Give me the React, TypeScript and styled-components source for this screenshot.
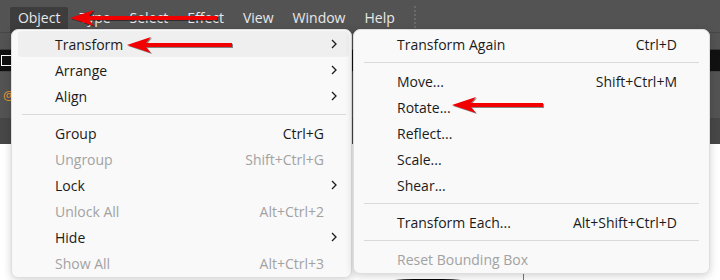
import React from "react";
import styled, { createGlobalStyle } from "styled-components";

const GlobalStyle = createGlobalStyle`
  body {
    margin: 0;
    background: #ffffff;
    font-family: "Open Sans", "Noto Sans", sans-serif;
  }
`;

type Entry =
  | { kind: "item"; label: string; shortcut?: string; sub?: boolean; disabled?: boolean; active?: boolean }
  | { kind: "sep" };

const objectMenu: Entry[] = [
  { kind: "item", label: "Transform", sub: true, active: true },
  { kind: "item", label: "Arrange", sub: true },
  { kind: "item", label: "Align", sub: true },
  { kind: "sep" },
  { kind: "item", label: "Group", shortcut: "Ctrl+G" },
  { kind: "item", label: "Ungroup", shortcut: "Shift+Ctrl+G", disabled: true },
  { kind: "item", label: "Lock", sub: true },
  { kind: "item", label: "Unlock All", shortcut: "Alt+Ctrl+2", disabled: true },
  { kind: "item", label: "Hide", sub: true },
  { kind: "item", label: "Show All", shortcut: "Alt+Ctrl+3", disabled: true },
];

const transformMenu: Entry[] = [
  { kind: "item", label: "Transform Again", shortcut: "Ctrl+D" },
  { kind: "sep" },
  { kind: "item", label: "Move...", shortcut: "Shift+Ctrl+M" },
  { kind: "item", label: "Rotate..." },
  { kind: "item", label: "Reflect..." },
  { kind: "item", label: "Scale..." },
  { kind: "item", label: "Shear..." },
  { kind: "sep" },
  { kind: "item", label: "Transform Each...", shortcut: "Alt+Shift+Ctrl+D" },
  { kind: "sep" },
  { kind: "item", label: "Reset Bounding Box", disabled: true },
];

const barItems = ["Edit", "Object", "Type", "Select", "Effect", "View", "Window", "Help"];

export default function App() {
  return (
    <>
      <GlobalStyle />
      <Screen>
        <MenuBar>
          {barItems.map((name) => (
            <BarItem key={name} $open={name === "Object"} $lead={name === "Edit"}>
              {name}
            </BarItem>
          ))}
          <Grip />
        </MenuBar>

        <ControlBar>
          <Caret>⌄</Caret>
        </ControlBar>
        <TabStrip>
          <TabBox />
        </TabStrip>
        <Panel>
          <PanelIcon>@</PanelIcon>
        </Panel>
        <PanelDark />
        <Canvas>
          <Artwork />
          <Guide />
        </Canvas>

        <Menu $left={11} $top={29} $width={341} $padRight={2}>
          {objectMenu.map((e, i) => renderEntry(e, i))}
        </Menu>
        <Menu $left={353} $top={29} $width={357} $padRight={7} $raised>
          {transformMenu.map((e, i) => renderEntry(e, i))}
        </Menu>

        <Arrow x={70} y={17.5} length={147} />
        <Arrow x={127} y={44.5} length={105} />
        <Arrow x={452} y={105} length={91} />
      </Screen>
    </>
  );
}

function renderEntry(e: Entry, i: number) {
  if (e.kind === "sep") return <Separator key={i} />;
  return (
    <Row key={i} $active={e.active} $disabled={e.disabled}>
      <span>{e.label}</span>
      <Shortcut>{e.shortcut}</Shortcut>
      <Chevron>{e.sub ? <ChevronIcon /> : null}</Chevron>
    </Row>
  );
}

const ChevronIcon = () => (
  <svg width="6" height="10" viewBox="0 0 6 10">
    <path d="M1 1 L5 5 L1 9" fill="none" stroke="#1b1b1b" strokeWidth="1.3" />
  </svg>
);

const Arrow: React.FC<{ x: number; y: number; length: number }> = ({ x, y, length }) => {
  const h = 16;
  const head = 24;
  return (
    <ArrowSvg
      width={length}
      height={h}
      viewBox={`0 0 ${length} ${h}`}
      style={{ left: x, top: y - h / 2 }}
    >
      <path
        d={`M0 8 L${head} 0 L${head - 5} 6 L${length} 6 L${length} 10 L${head - 5} 10 L${head} 16 Z`}
        fill="#f20000"
      />
    </ArrowSvg>
  );
};

const Screen = styled.div`
  position: relative;
  width: 720px;
  height: 280px;
  overflow: hidden;
  display: flex;
  flex-direction: column;
  background: #ffffff;
`;

const MenuBar = styled.div`
  height: 33px;
  flex: none;
  display: flex;
  align-items: flex-start;
  padding-top: 7px;
  box-sizing: border-box;
  background: #535353;
  border-bottom: 1px solid #474747;
`;

const BarItem = styled.div<{ $open?: boolean; $lead?: boolean }>`
  height: 26px;
  padding: 0 8px;
  margin-right: 3px;
  margin-left: ${(p) => (p.$lead ? "-34px" : "0")};
  box-sizing: border-box;
  font-size: 14px;
  line-height: 22px;
  color: #e8e8e8;
  background: ${(p) => (p.$open ? "#3d3d3d" : "transparent")};
  border-radius: 2px 2px 0 0;
`;

const Grip = styled.div`
  width: 0;
  height: 22px;
  margin: -1px 0 0 8px;
  border-left: 2px dotted #6a6a6a;
`;

const ControlBar = styled.div`
  height: 16px;
  flex: none;
  background: #535353;
  border-bottom: 1px solid #3b3b3b;
  display: flex;
  justify-content: flex-end;
`;

const Caret = styled.span`
  color: #e0e0e0;
  font-size: 14px;
  line-height: 16px;
  margin: 8px 4px 0 0;
  height: 8px;
  overflow: visible;
`;

const TabStrip = styled.div`
  height: 21px;
  flex: none;
  background: #111111;
  display: flex;
  align-items: center;
`;

const TabBox = styled.div`
  width: 9px;
  height: 9px;
  border: 1px solid #ffffff;
  margin-left: 1px;
`;

const Panel = styled.div`
  height: 46px;
  flex: none;
  background: #535353;
  border-top: 1px solid #484848;
  display: flex;
  align-items: center;
`;

const PanelIcon = styled.span`
  color: #e89a3c;
  font-size: 13px;
  margin-left: 3px;
`;

const PanelDark = styled.div`
  height: 26px;
  flex: none;
  background: #474747;
`;

const Canvas = styled.div`
  flex: 1;
  position: relative;
  background: #ffffff;
`;

const Artwork = styled.div`
  position: absolute;
  left: 358px;
  top: 135px;
  width: 140px;
  height: 40px;
  background: #050505;
  border-radius: 40% 40% 0 0;
`;

const Guide = styled.div`
  position: absolute;
  left: 523px;
  top: 128px;
  width: 1px;
  height: 20px;
  background: #3b7de0;
`;

const Menu = styled.div<{ $left: number; $top: number; $width: number; $padRight: number; $raised?: boolean }>`
  position: absolute;
  left: ${(p) => p.$left}px;
  top: ${(p) => p.$top}px;
  width: ${(p) => p.$width}px;
  box-sizing: border-box;
  padding: 1px ${(p) => p.$padRight}px 1px 6px;
  background: #f9f9f9;
  border: 1px solid #dedede;
  border-radius: 7px;
  box-shadow: 0 2px 8px rgba(0, 0, 0, 0.18);
  z-index: ${(p) => (p.$raised ? 3 : 2)};
`;

const Row = styled.div<{ $active?: boolean; $disabled?: boolean }>`
  height: 26px;
  display: grid;
  grid-template-columns: 1fr auto 25px;
  align-items: center;
  padding-left: 37px;
  font-size: 14px;
  color: ${(p) => (p.$disabled ? "#a2a2a2" : "#1b1b1b")};
  background: ${(p) => (p.$active ? "#efefef" : "transparent")};
  border-radius: 4px;
  white-space: nowrap;
`;

const Shortcut = styled.span`
  text-align: right;
`;

const Chevron = styled.span`
  display: flex;
  align-items: center;
  padding-left: 7px;
`;

const Separator = styled.div`
  height: 1px;
  margin: 5px 3px 5px 4px;
  background: #d9d9d9;
`;

const ArrowSvg = styled.svg`
  position: absolute;
  z-index: 5;
  filter: drop-shadow(1px 1px 0.6px rgba(0, 0, 0, 0.45));
`;
